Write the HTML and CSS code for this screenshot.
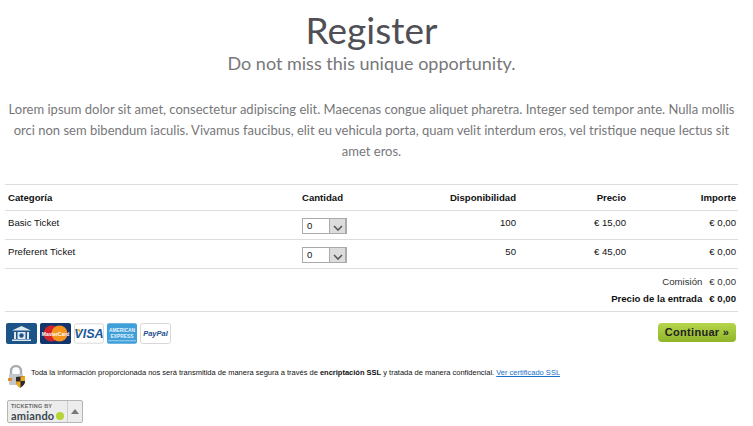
FILE: index.html
```html
<!DOCTYPE html>
<html lang="en">
<head>
  <meta charset="UTF-8">
  <meta name="viewport" content="width=device-width, initial-scale=1.0">
  <title>Register</title>
  <link rel="stylesheet" href="styles.css">
</head>
<body>
  <div class="page">
    <h1 class="title">Register</h1>
    <h2 class="subtitle">Do not miss this unique opportunity.</h2>
    <p class="intro">Lorem ipsum dolor sit amet, consectetur adipiscing elit. Maecenas congue aliquet pharetra. Integer sed tempor ante. Nulla mollis orci non sem bibendum iaculis. Vivamus faucibus, elit eu vehicula porta, quam velit interdum eros, vel tristique neque lectus sit amet eros.</p>

    <table class="tickets">
      <thead>
        <tr>
          <th class="col-name">Categoría</th>
          <th class="col-qty">Cantidad</th>
          <th class="num col-avail">Disponibilidad</th>
          <th class="num col-price">Precio</th>
          <th class="num col-total">Importe</th>
        </tr>
      </thead>
      <tbody>
        <tr>
          <td>Basic Ticket</td>
          <td><div class="select"><span class="select-value">0</span><span class="select-btn"><svg width="10" height="6" viewBox="0 0 10 6"><path d="M1 1l4 4 4-4" fill="none" stroke="#555" stroke-width="1.6"/></svg></span></div></td>
          <td class="num">100</td>
          <td class="num">€ 15,00</td>
          <td class="num">€ 0,00</td>
        </tr>
        <tr>
          <td>Preferent Ticket</td>
          <td><div class="select"><span class="select-value">0</span><span class="select-btn"><svg width="10" height="6" viewBox="0 0 10 6"><path d="M1 1l4 4 4-4" fill="none" stroke="#555" stroke-width="1.6"/></svg></span></div></td>
          <td class="num">50</td>
          <td class="num">€ 45,00</td>
          <td class="num">€ 0,00</td>
        </tr>
      </tbody>
    </table>

    <div class="summary">
      <div class="summary-row"><span>Comisión</span><span>€ 0,00</span></div>
      <div class="summary-row strong"><span>Precio de la entrada</span><span>€ 0,00</span></div>
    </div>

    <div class="pay-bar">
      <div class="pay-icons">
        <svg class="pay" viewBox="0 0 31 21" width="31" height="21">
          <rect width="31" height="21" rx="2" fill="#1d5487"/>
          <path d="M15.5 3L25 7.5H6z" fill="#dfe8f0"/>
          <path d="M8 9h15v7H8z" fill="#dfe8f0"/>
          <path d="M10 9h1.5v7H10zM19.500 9H21v7h-1.500z" fill="#1d5487"/>
          <path d="M6 16.500h19V18H6z" fill="#dfe8f0"/>
          <circle cx="15.500" cy="12.500" r="2.200" fill="#1d5487"/>
        </svg>
        <svg class="pay" viewBox="0 0 31 21" width="31" height="21">
          <rect width="31" height="21" rx="2" fill="#14346c"/>
          <circle cx="11.500" cy="10.500" r="8" fill="#d2232a"/>
          <circle cx="19.500" cy="10.500" r="8" fill="#f7941d"/>
          <text x="15.500" y="12.500" class="pay-mc">MasterCard</text>
        </svg>
        <svg class="pay" viewBox="0 0 31 21" width="30" height="21">
          <rect x=".5" y=".5" width="30" height="20" rx="2" fill="#fff" stroke="#d8d8d8"/>
          <text x="15.500" y="15" class="pay-visa">VISA</text>
          <path d="M3 6l3 0 1 4z" fill="#f2a81d"/>
        </svg>
        <svg class="pay" viewBox="0 0 31 21" width="30" height="21">
          <rect width="31" height="21" rx="2" fill="#3f9fd8"/>
          <text x="15.500" y="9" class="pay-amex">AMERICAN</text>
          <text x="15.500" y="15.500" class="pay-amex">EXPRESS</text>
          <path d="M1 18h29" stroke="#a8d6f0"/>
        </svg>
        <svg class="pay" viewBox="0 0 31 21" width="31" height="21">
          <rect x=".5" y=".5" width="30" height="20" rx="2" fill="#fff" stroke="#d8d8d8"/>
          <text x="15.500" y="13" class="pay-paypal">PayPal</text>
        </svg>
      </div>
      <a class="continue" href="#">Continuar »</a>
    </div>

    <div class="secure">
      <svg class="lock" viewBox="0 0 20 24" width="20" height="24">
        <path d="M4 11V7a5 5 0 0 1 10 0v4" fill="none" stroke="#a9aeb3" stroke-width="2.400"/>
        <rect x="2" y="10" width="14" height="11" rx="1" fill="#c3c7cb"/>
        <path d="M1 14l4 0 0 3-4 0z" fill="#e0902a"/>
        <path d="M9 13l9-1v6c0 3-4 5-4.500 6C13 23 9 21 9 18z" fill="#2b2b2b"/>
        <path d="M13.500 12.500L18 12v5h-4.500zM9 17.500h4.500V24C12 23 9 21 9 18z" fill="#f0a51e"/>
      </svg>
      <p class="secure-text">Toda la información proporcionada nos será transmitida de manera segura a través de <b>encriptación SSL</b> y tratada de manera confidencial. <a href="#">Ver certificado SSL</a></p>
    </div>

    <div class="badge">
      <div class="badge-main">
        <div class="badge-by">TICKETING BY</div>
        <div class="badge-name">amiando<span class="badge-dot"></span></div>
      </div>
      <div class="badge-side"><span class="badge-arrow"></span></div>
    </div>
  </div>
</body>
</html>
```

FILE: styles.css
```css
body {
  margin: 0;
  background: #fff;
  font-family: "Liberation Sans", Arial, sans-serif;
  color: #111;
}

.page {
  width: 733px;
  margin-left: 5px;
}

.title {
  margin: 0;
  padding-top: 9px;
  text-align: center;
  font-family: Lato, sans-serif;
  font-weight: 400;
  font-size: 37px;
  line-height: 42px;
  color: #4f4f55;
}

.subtitle {
  margin: 0;
  text-align: center;
  font-family: Lato, sans-serif;
  font-weight: 400;
  font-size: 18px;
  line-height: 24px;
  color: #77777a;
}

.intro {
  margin: 24px 0 0;
  text-align: center;
  font-family: Lato, sans-serif;
  font-size: 13px;
  line-height: 21px;
  color: #77777a;
}

.tickets {
  width: 100%;
  margin-top: 22px;
  border-collapse: collapse;
  table-layout: fixed;
  font-size: 9.600px;
  border-top: 1px solid #ddd;
}

.tickets th {
  box-sizing: border-box;
  height: 26px;
  padding: 0 2px 0 3px;
  text-align: left;
  font-size: 9.600px;
  border-bottom: 1px solid #ddd;
}

.tickets td {
  box-sizing: border-box;
  height: 29px;
  padding: 6px 2px 0 3px;
  vertical-align: top;
  line-height: 12px;
  border-bottom: 1px solid #ddd;
}

.tickets .num {
  text-align: right;
}

.col-name { width: 294px; }
.col-qty { width: 90px; }
.col-avail { width: 129px; }
.col-price { width: 110px; }
.col-total { width: 110px; }

.select {
  display: flex;
  width: 42px;
  height: 14px;
  margin-top: 1px;
  border: 1px solid #aaa;
  border-width: 1px 2px 1px 1px;
  background: #fff;
}

.select-value {
  flex: 1;
  padding-left: 4px;
  font-size: 9.600px;
  line-height: 14px;
}

.select-btn {
  display: flex;
  align-items: flex-end;
  justify-content: center;
  width: 16px;
  padding-bottom: 2px;
  box-sizing: border-box;
  background: #dcdcdc;
  border-left: 1px solid #aaa;
}

.summary {
  padding: 4px 2px 4px 0;
  border-bottom: 1px solid #ddd;
  font-size: 9.600px;
}

.summary-row {
  display: flex;
  justify-content: flex-end;
  gap: 7px;
  height: 17px;
  line-height: 17px;
  color: #333;
}

.summary-row.strong {
  font-weight: bold;
  color: #111;
}

.pay-bar {
  display: flex;
  justify-content: space-between;
  align-items: flex-start;
  padding: 11px 2px 0 1px;
}

.pay-icons {
  display: flex;
  gap: 3px;
}

.pay {
  display: block;
}

.pay text {
  text-anchor: middle;
  font-family: "Liberation Sans", sans-serif;
}

.pay-mc {
  font-size: 5px;
  font-weight: bold;
  fill: #fff;
}

.pay-visa {
  font-size: 13px;
  font-weight: bold;
  font-style: italic;
  fill: #1a5a9c;
}

.pay-amex {
  font-size: 5px;
  font-weight: bold;
  fill: #e6f4fc;
}

.pay-paypal {
  font-size: 7.500px;
  font-weight: bold;
  font-style: italic;
  fill: #1f4f8f;
}

.continue {
  display: block;
  width: 78px;
  height: 19px;
  text-align: center;
  line-height: 18px;
  font-size: 11px;
  font-weight: bold;
  letter-spacing: .3px;
  text-decoration: none;
  color: #222;
  border-radius: 4px;
  background: linear-gradient(#b5d54a, #8fb52b);
}

.secure {
  display: flex;
  align-items: center;
  gap: 4px;
  padding: 20px 0 0 2px;
}

.lock {
  flex: none;
}

.secure-text {
  margin: 0 0 8px;
  font-size: 7.500px;
  white-space: nowrap;
}

.secure-text a {
  color: #1a6fc9;
}

.badge {
  display: flex;
  width: 74px;
  height: 21px;
  margin: 12px 0 0 2px;
  border: 1px solid #b5b5b5;
  border-radius: 2px;
  background: #ececec;
}

.badge-main {
  flex: 1;
  padding: 2px 0 0 3px;
}

.badge-by {
  font-size: 5.500px;
  line-height: 7px;
  font-weight: bold;
  letter-spacing: .2px;
  color: #666;
}

.badge-name {
  display: flex;
  align-items: center;
  gap: 2px;
  font-family: Lato, sans-serif;
  font-size: 11px;
  line-height: 12px;
  font-weight: bold;
  letter-spacing: .2px;
  color: #3b4750;
}

.badge-dot {
  width: 8px;
  height: 8px;
  border-radius: 50%;
  background: #b7d433;
}

.badge-side {
  display: flex;
  align-items: center;
  justify-content: center;
  width: 14px;
  border-left: 1px solid #ccc;
}

.badge-arrow {
  border: 4px solid transparent;
  border-top: 0;
  border-bottom: 5px solid #777;
}
```
